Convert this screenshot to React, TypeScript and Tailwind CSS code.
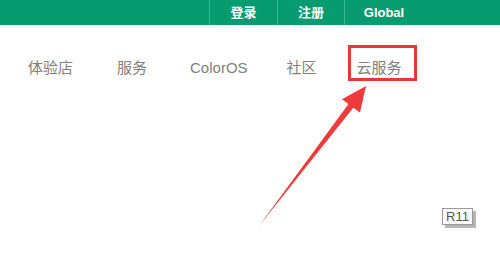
import React from "react";

export default function App() {
  const cjk = { fontFamily: '"Liberation Sans", "Noto Sans CJK SC", sans-serif' };
  return (
    <div className="relative w-[500px] h-[280px] bg-white overflow-hidden" style={cjk}>
      {/* top bar */}
      <div className="flex h-[25px] bg-[#079b70] pl-[209px] text-white font-bold text-[13px]">
        <div className="w-[68px] border-l border-[#3cb38c] flex items-center justify-center">登录</div>
        <div className="w-[67px] border-l border-[#3cb38c] flex items-center justify-center">注册</div>
        <div className="w-[79px] border-l border-[#3cb38c] flex items-center justify-center">Global</div>
      </div>
      {/* nav */}
      <div className="flex items-center mt-[33px] pl-[28px] text-[15px] leading-[20px] text-[#808080]">
        <span>体验店</span>
        <span className="ml-[44px]">服务</span>
        <span className="ml-[43px]">ColorOS</span>
        <span className="ml-[39px]">社区</span>
        <span className="relative ml-[40px]">
          云服务
          <span className="absolute left-[-9px] top-[-13px] w-[69px] h-[36px] border-[3px] border-[#e8363a]" />
        </span>
      </div>
      {/* arrow */}
      <svg className="absolute left-0 top-0" width="500" height="280" viewBox="0 0 500 280">
        <polygon
          points="259,226 353.3,107.7 360,112.5 366,86 342,99.3 348.5,104.1"
          fill="#f03a3b"
        />
      </svg>
      {/* R11 label */}
      <div className="absolute left-[442px] top-[208px] w-[31px] h-[17px] border border-[#9a9a9a] bg-white shadow-[3px_3px_0_#b5b5b5] flex items-center justify-center text-[13px] text-[#555]">
        R11
      </div>
    </div>
  );
}
